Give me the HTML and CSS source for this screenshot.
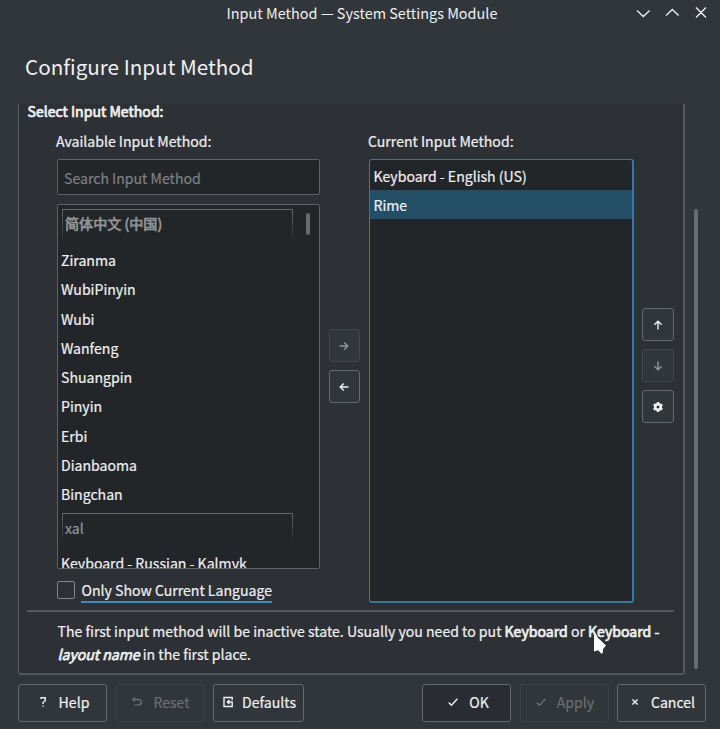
FILE: index.html
```html
<!DOCTYPE html>
<html lang="en">
<head>
<meta charset="utf-8">
<title>Input Method — System Settings Module</title>
<link rel="stylesheet" href="styles.css">
</head>
<body>
<header class="titlebar">
  <span class="title">Input Method — System Settings Module</span>
  <svg class="controls" width="72" height="16" viewBox="0 0 72 16"><path d="M1 5.5l6.3 6 6.3-6M30 10.5l6.3-6 6.3 6M60 2.5l10 10M70 2.5l-10 10"/></svg>
</header>
<h1>Configure Input Method</h1>
<main class="viewport">
  <section class="frame">
    <h2>Select Input Method:</h2>
    <div class="columns">
      <div class="available">
        <label class="caption" for="search">Available Input Method:</label>
        <input id="search" class="search" placeholder="Search Input Method">
        <div class="list">
          <div class="group first" lang="zh-CN">简体中文 (中国)</div>
          <div class="item">Ziranma</div>
          <div class="item">WubiPinyin</div>
          <div class="item">Wubi</div>
          <div class="item">Wanfeng</div>
          <div class="item">Shuangpin</div>
          <div class="item">Pinyin</div>
          <div class="item">Erbi</div>
          <div class="item">Dianbaoma</div>
          <div class="item">Bingchan</div>
          <div class="group">xal</div>
          <div class="item russian">Keyboard - Russian - Kalmyk</div>
          <span class="list-thumb"></span>
        </div>
        <div class="check"><span class="box"></span><span class="check-label">Only Show Current Language</span></div>
      </div>
      <div class="transfer">
        <button class="tool disabled" aria-label="Add"><svg width="10" height="10" viewBox="0 0 10 10"><path d="M.5 5h8M5.2 1.4L8.8 5 5.2 8.6"/></svg></button>
        <button class="tool" aria-label="Remove"><svg width="10" height="10" viewBox="0 0 10 10"><path d="M9.5 5h-8M4.8 1.4L1.2 5l3.6 3.6"/></svg></button>
      </div>
      <div class="current">
        <span class="caption">Current Input Method:</span>
        <div class="current-list">
          <div class="row">Keyboard - English (US)</div>
          <div class="row selected">Rime</div>
        </div>
      </div>
      <div class="order">
        <button class="tool" aria-label="Move up"><svg width="10" height="10" viewBox="0 0 10 10"><path d="M5 9.5v-8M1.4 4.8L5 1.2l3.6 3.6"/></svg></button>
        <button class="tool disabled" aria-label="Move down"><svg width="10" height="10" viewBox="0 0 10 10"><path d="M5 .5v8M1.4 5.2L5 8.8l3.6-3.6"/></svg></button>
        <button class="tool" aria-label="Configure"><svg width="12" height="12" viewBox="-6 -6 12 12"><g class="gear"><circle r="2.8"/><path d="M0-5v2M0 5V3M-4.33-2.5l1.73 1M4.33-2.5l-1.73 1M-4.33 2.5l1.73-1M4.33 2.5l-1.73-1"/></g></svg></button>
      </div>
    </div>
    <p class="hint">The first input method will be inactive state. Usually you need to put <b>Keyboard</b> or <b>Keyboard -<br><i>layout name</i></b> in the first place.</p>
  </section>
  <div class="scroll"><span class="thumb"></span></div>
</main>
<footer class="actions">
  <button class="btn help"><svg width="10" height="12" viewBox="0 0 10 12"><path d="M3 3V1.7h4.2v3L5 6.5v1.4M5 9.4v1.4"/></svg>Help</button>
  <button class="btn reset disabled"><svg width="10" height="12" viewBox="0 0 10 12"><path d="M1 3.5h5.2q3 0 3 2.8t-3 2.8H2.5M3 1.4L.9 3.5 3 5.6"/></svg>Reset</button>
  <button class="btn defaults"><svg width="10" height="12" viewBox="0 0 10 12"><path d="M9.2 4V1.5H1v9h8.2V6H4.4M6.4 3.9L4.3 6l2.1 2.1"/></svg>Defaults</button>
  <span class="spacer"></span>
  <button class="btn ok"><svg width="10" height="12" viewBox="0 0 10 12"><path d="M.7 6.5L3.5 9.2 9.4 2.8"/></svg>OK</button>
  <button class="btn apply disabled"><svg width="10" height="12" viewBox="0 0 10 12"><path d="M.7 6.5L3.5 9.2 9.4 2.8"/></svg>Apply</button>
  <button class="btn cancel"><svg width="10" height="12" viewBox="0 0 10 12"><path d="M2.4 3.4l5.2 5.2M7.6 3.4L2.4 8.6"/></svg>Cancel</button>
</footer>
<svg class="pointer" width="14" height="22" viewBox="0 0 14 22"><path d="M1 1v17.5l4.2-1.2 3.2 3.4 1.3-.6.4-4.2 2.9-3.5z"/></svg>
</body>
</html>
```
FILE: styles.css
```css
* { box-sizing: border-box; }
body {
  position: relative;
  display: flex;
  flex-direction: column;
  width: 720px;
  height: 729px;
  margin: 0;
  overflow: hidden;
  background: #31363b;
  color: #eff0f1;
  font: 14.08px/22px "Noto Sans CJK SC", sans-serif;
  -webkit-text-stroke: 0.2px;
}
button, input { font: inherit; color: inherit; }
svg { display: block; flex: none; fill: none; stroke: currentColor; stroke-width: 1.4; }
.titlebar {
  display: grid;
  grid-template-columns: 1fr auto 1fr;
  align-items: center;
  height: 26px;
  padding: 0 12px;
  font-size: 14.45px;
  -webkit-text-stroke: 0;
}
.title { grid-column: 2; margin-left: 4px; }
.controls { justify-self: end; stroke-width: 1.3; }
h1 {
  height: 78px;
  margin: 0;
  padding: 24px 0 0 25px;
  font-size: 20.65px;
  line-height: 32px;
  font-weight: 400;
  -webkit-text-stroke: 0;
}
.viewport { display: flex; height: 571px; padding-left: 18px; }
.frame {
  width: 667px;
  border: 1px solid #54585c;
  border-width: 0 2px 2px 1px;
  border-radius: 0 0 3px 3px;
  background: #2d3035;
}
b, h2, .group.first { font-weight: 400; -webkit-text-stroke: 0.7px; }
h2 { margin: 0; padding: 0 0 0 8.5px; height: 26px; font-size: inherit; line-height: 15px; }
.columns {
  display: grid;
  grid-template-columns: 263px 31px 265px 32px;
  column-gap: 9px;
  height: 482px;
  margin: 0 9px 0 8px;
  padding-left: 30px;
  border-bottom: 2px solid #54585c;
}
.caption { display: block; height: 29px; line-height: 22px; margin-left: -1px; }
.search {
  display: block;
  width: 263px;
  height: 36px;
  padding: 2px 6px 0;
  border: 1px solid #5e6265;
  border-radius: 2px;
  background: #232629;
  outline: 0;
}
.search::placeholder { color: #7e8183; opacity: 1; }
.list {
  position: relative;
  height: 365px;
  margin-top: 9px;
  padding: 4px 3px 0;
  border: 1px solid #5e6265;
  border-radius: 2px;
  background: #232629;
  overflow: hidden;
}
.group {
  position: relative;
  width: 231px;
  height: 33px;
  padding: 3px 0 0 2px;
  margin: 4px 0 0 1px;
  border: 1px solid #666a6d;
  border-bottom: 0;
  border-image: linear-gradient(#666a6d, #232629 85%) 1;
  color: #929597;
}
.group.first { height: 37px; margin-top: 0; padding-top: 2px; }
.item { height: 29.25px; line-height: 29px; }
.group + .russian { margin-top: 3px; }
.list-thumb {
  position: absolute;
  top: 8px;
  right: 9px;
  width: 4px;
  height: 22px;
  border-radius: 2px;
  background: #686b6e;
}
.check { display: flex; align-items: flex-start; gap: 6px; padding-top: 11px; }
.box { width: 18px; height: 18px; margin-top: 1px; border: 1px solid #85888a; border-radius: 2px; }
.check-label { height: 23px; line-height: 20px; padding-left: .5px; border-bottom: 2px solid #3190c8; }
.transfer, .order { display: flex; flex-direction: column; gap: 8px; }
.transfer { padding-top: 199px; }
.transfer svg { margin-right: 1px; }
.order { padding-top: 178px; margin-left: -1px; }
.tool {
  display: grid;
  place-items: center;
  width: 32px;
  height: 33px;
  padding: 0;
  border: 1px solid #65696d;
  border-radius: 3px;
  background: #31363b;
}
.transfer .tool { width: 31px; }
.disabled { color: #73777a; border-color: #43474b; }
.tool.disabled { color: #919598; }
.gear circle { stroke-width: 2.6; }
.gear path { stroke-width: 2.4; }
.current-list { height: 444px; padding: 1px 0; border: 2px solid #327b9f; border-width: 1px 2px 2px 1px; border-radius: 3px; background: #232629; }
.row { height: 29px; padding-left: 3.5px; line-height: 30px; }
.selected { background: #224f65; }
.hint { margin: 0; padding: 8px 0 0 38.5px; line-height: 23px; white-space: nowrap; }
.scroll { padding: 105px 0 0 9px; }
.thumb { display: block; width: 4px; height: 460px; border-radius: 2px; background: #6a6e71; }
.actions { display: flex; gap: 8.5px; padding: 9px 14px 0 18px; }
.btn {
  display: flex;
  align-items: center;
  justify-content: center;
  gap: 11px;
  width: 89px;
  height: 38px;
  padding: 0 0 2px 2px;
  border: 1px solid #65696d;
  border-radius: 3px;
  background: #31363b;
}
.btn.disabled { color: #6a6e71; border-color: #3e4247; }
.spacer { flex: 1; }
.defaults { width: 91px; gap: 9px; }
.ok { background: #292c30; padding-left: 4px; }
.pointer { position: absolute; left: 593px; top: 633px; fill: #fff; stroke: none; }
```
